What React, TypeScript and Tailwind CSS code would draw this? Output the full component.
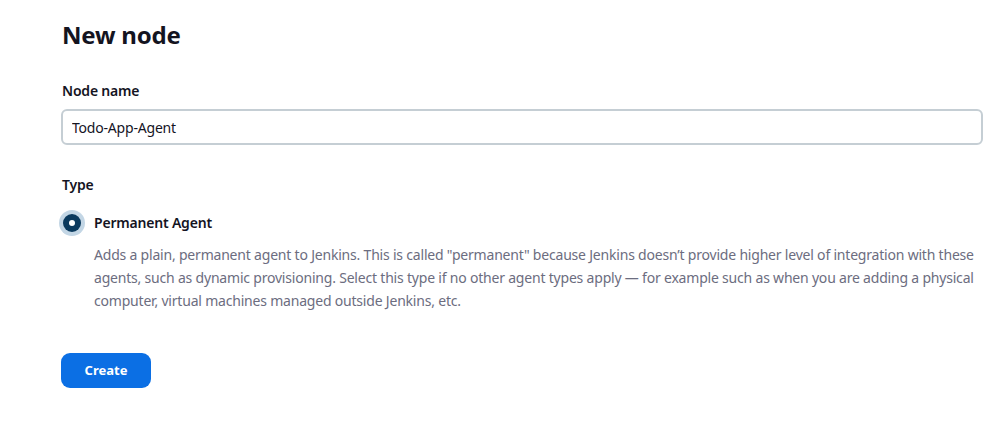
export default function App() {
  return (
    <div className="min-h-screen bg-white font-['Noto_Sans',sans-serif] text-[#14141f]">
      <div className="pl-[62px] pr-[22px] pt-[18px]">
        <h1 className="text-[24px] font-bold leading-[34px] tracking-[-0.2px]">New node</h1>

        <div className="mt-[29px]">
          <label className="block text-[14px] font-semibold leading-[20px] tracking-[-0.2px]">Node name</label>
          <input
            className="mt-[8px] -ml-px block h-[36px] w-full rounded-[6px] border-2 border-[#c5ced4] px-[9px] text-[14px] tracking-[-0.2px] text-[#14141f] outline-none"
            defaultValue="Todo-App-Agent"
          />
        </div>

        <div className="mt-[30px]">
          <div className="text-[14px] font-semibold leading-[20px] tracking-[-0.2px]">Type</div>
          <div className="mt-[15px] flex items-start">
            <div className="-ml-[3px] flex h-[26px] w-[26px] shrink-0 items-center justify-center rounded-full bg-[#c3d6e5]">
              <div className="flex h-[18px] w-[18px] items-center justify-center rounded-full bg-[#0b3a5e]">
                <div className="h-[6px] w-[6px] rounded-full bg-white" />
              </div>
            </div>
            <div className="ml-[9px]">
              <div className="text-[14px] font-semibold leading-[26px] tracking-[-0.2px]">Permanent Agent</div>
              <p className="mt-[7px] text-[14px] leading-[23px] tracking-[-0.2px] text-[#6c6d80]">
                Adds a plain, permanent agent to Jenkins. This is called "permanent" because Jenkins doesn’t provide higher level of integration with these agents, such as dynamic provisioning. Select this type if no other agent types apply — for example such as when you are adding a physical computer, virtual machines managed outside Jenkins, etc.
              </p>
            </div>
          </div>
        </div>

        <button className="mt-[41px] -ml-px h-[35px] w-[90px] rounded-[9px] bg-[#0b6fe4] text-[13px] font-bold text-white">
          Create
        </button>
      </div>
    </div>
  );
}
